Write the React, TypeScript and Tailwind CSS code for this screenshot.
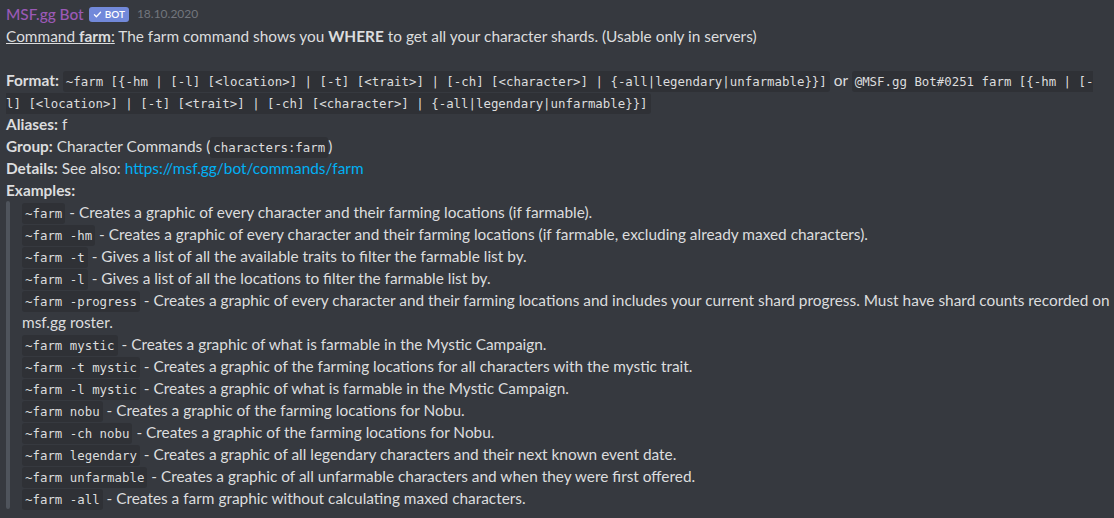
import React from 'react'

const C = ({ children }: { children: React.ReactNode }) => (
  <code className="font-['DejaVu_Sans_Mono',monospace] text-[12.4px] leading-[14px] bg-[#2f3136] text-[#dcddde] rounded-[3px] px-[3px] py-[3px]">
    {children}
  </code>
)

const EXAMPLES: { cmd: string; text: string }[] = [
  { cmd: '~farm', text: 'Creates a graphic of every character and their farming locations (if farmable).' },
  { cmd: '~farm -hm', text: 'Creates a graphic of every character and their farming locations (if farmable, excluding already maxed characters).' },
  { cmd: '~farm -t', text: 'Gives a list of all the available traits to filter the farmable list by.' },
  { cmd: '~farm -l', text: 'Gives a list of all the locations to filter the farmable list by.' },
  {
    cmd: '~farm -progress',
    text: 'Creates a graphic of every character and their farming locations and includes your current shard progress. Must have shard counts recorded on msf.gg roster.',
  },
  { cmd: '~farm mystic', text: 'Creates a graphic of what is farmable in the Mystic Campaign.' },
  { cmd: '~farm -t mystic', text: 'Creates a graphic of the farming locations for all characters with the mystic trait.' },
  { cmd: '~farm -l mystic', text: 'Creates a graphic of what is farmable in the Mystic Campaign.' },
  { cmd: '~farm nobu', text: 'Creates a graphic of the farming locations for Nobu.' },
  { cmd: '~farm -ch nobu', text: 'Creates a graphic of the farming locations for Nobu.' },
  { cmd: '~farm legendary', text: 'Creates a graphic of all legendary characters and their next known event date.' },
  { cmd: '~farm unfarmable', text: 'Creates a graphic of all unfarmable characters and when they were first offered.' },
  { cmd: '~farm -all', text: 'Creates a farm graphic without calculating maxed characters.' },
]

export default function App() {
  return (
    <div className="bg-[#36393f] w-full min-h-screen pl-[6px] pt-[3px] text-[#dcddde] font-['Lato',sans-serif] text-[15.4px] leading-[22px]">
      {/* header */}
      <div className="flex items-center h-[22px]">
        <span className="text-[#9b59b6] font-medium">MSF.gg Bot</span>
        <span className="ml-[5px] h-[15px] px-[4px] rounded-[3px] bg-[#7289da] text-white text-[10px] font-semibold flex items-center gap-[3px] leading-none">
          <svg width="9" height="9" viewBox="0 0 16 16" fill="none">
            <path d="M2.5 8.5l3.5 3.5 7.5-8" stroke="white" strokeWidth="2.2" strokeLinecap="round" strokeLinejoin="round" />
          </svg>
          BOT
        </span>
        <span className="ml-[8px] text-[12px] text-[#72767d]">18.10.2020</span>
      </div>

      <div>
        <span className="underline">
          Command <strong className="font-bold">farm</strong>:
        </span>{' '}
        The farm command shows you <strong className="font-bold">WHERE</strong> to get all your character shards. (Usable only in servers)
      </div>
      <div className="h-[22px]" />

      <div>
        <strong className="font-bold">Format:</strong>{' '}
        <C>~farm [{'{'}-hm | [-l] [&lt;location&gt;] | [-t] [&lt;trait&gt;] | [-ch] [&lt;character&gt;] | {'{'}-all|legendary|unfarmable{'}}'}]</C>{' '}
        or{' '}
        <C>
          @MSF.gg Bot#0251 farm [{'{'}-hm | [-
          <br />
          l] [&lt;location&gt;] | [-t] [&lt;trait&gt;] | [-ch] [&lt;character&gt;] | {'{'}-all|legendary|unfarmable{'}}'}]
        </C>
      </div>
      <div>
        <strong className="font-bold">Aliases:</strong> f
      </div>
      <div>
        <strong className="font-bold">Group:</strong> Character Commands (<C>characters:farm</C>)
      </div>
      <div>
        <strong className="font-bold">Details:</strong> See also:{' '}
        <span className="text-[#00b0f4]">https://msf.gg/bot/commands/farm</span>
      </div>
      <div>
        <strong className="font-bold">Examples:</strong>
      </div>

      <div className="flex">
        <div className="w-[4px] rounded-[4px] bg-[#4f545c] shrink-0" />
        <div className="pl-[12px]">
          {EXAMPLES.map((e) => (
            <div key={e.cmd}>
              <C>{e.cmd}</C> - {e.text}
            </div>
          ))}
        </div>
      </div>
    </div>
  )
}
